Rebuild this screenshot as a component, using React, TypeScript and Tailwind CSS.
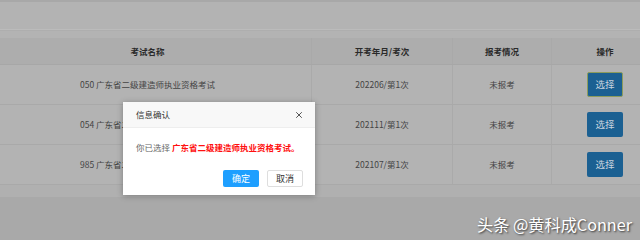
import { X } from 'lucide-react'

interface ExamRow {
  name: string
  period: string
  status: string
}

const ROWS: ExamRow[] = [
  { name: '050 广东省二级建造师执业资格考试', period: '202206/第1次', status: '未报考' },
  { name: '054 广东省二级建造师执业资格考试', period: '202111/第1次', status: '未报考' },
  { name: '985 广东省二级建造师执业资格考试', period: '202107/第1次', status: '未报考' }
]

export default function App() {
  return (
    <div
      className="relative w-[640px] h-[240px] overflow-hidden bg-[#a9a9a9] text-[8.5px]"
      style={{ fontFamily: '"Noto Sans CJK SC", "Noto Sans", sans-serif' }}
    >
      {/* Page under the mask */}
      <div className="bg-[#b3b3b3]">
        <div className="h-[29px] border-t-2 border-[#a8a8a8]" />
        <div className="h-[1px] bg-[#bbbbbb]" />
        <div className="h-[8px] border-t border-[#aeaeae]" />

        {/* Table */}
        <div className="ml-[-16px] w-[674px]">
          <div className="flex h-[27px] items-center bg-[#adadad] border-b border-[#a7a7a7] font-bold text-[#2a2a2a]">
            <div className="w-[328px] h-full flex items-center justify-center border-r border-[#a9a9a9]">考试名称</div>
            <div className="w-[141px] h-full flex items-center justify-center border-r border-[#a9a9a9]">开考年月/考次</div>
            <div className="w-[99px] h-full flex items-center justify-center border-r border-[#a9a9a9]">报考情况</div>
            <div className="w-[106px] h-full flex items-center justify-center">操作</div>
          </div>
          {ROWS.map((row, i) => (
            <div key={row.name} className="flex h-[40px] items-center border-b border-[#a9a9a9] text-[#444444]">
              <div className="w-[328px] h-full flex items-center justify-center border-r border-[#aaaaaa]">{row.name}</div>
              <div className="w-[141px] h-full flex items-center justify-center border-r border-[#aaaaaa]">{row.period}</div>
              <div className="w-[99px] h-full flex items-center justify-center border-r border-[#aaaaaa]">{row.status}</div>
              <div className="w-[106px] h-full flex items-center justify-center">
                <button
                  type="button"
                  className={`w-[36px] h-[25px] rounded-[2px] bg-[#1b6092] text-[9.5px] text-[#c9d4de] ${i === 0 ? 'border border-[#8c9c5c]' : ''}`}
                >
                  选择
                </button>
              </div>
            </div>
          ))}
          <div className="h-[12px] bg-[#b0b0b0]" />
        </div>
      </div>

      {/* Confirm dialog */}
      <div className="absolute left-[123px] top-[102px] w-[192px] h-[93px] bg-white shadow-[0_1px_6px_rgba(0,0,0,0.3)] flex flex-col">
        <div className="h-[26px] flex items-center justify-between pl-[13px] pr-[11px] bg-[#f8f8f8] border-b border-[#eeeeee] text-[#333333]">
          <span>信息确认</span>
          <X className="w-[10px] h-[10px] text-[#333333]" strokeWidth={2} />
        </div>
        <div className="pl-[13px] pt-[13px] h-[29px] whitespace-nowrap">
          <span className="text-[#666666]">你已选择 </span>
          <span className="text-[#ff1010] font-bold">广东省二级建造师执业资格考试。</span>
        </div>
        <div className="flex justify-end gap-[8px] pr-[12px] pt-[13px]">
          <button type="button" className="w-[36px] h-[17px] leading-[17px] bg-[#1e9fff] text-white text-[9px] rounded-[2px]">
            确定
          </button>
          <button type="button" className="w-[36px] h-[17px] leading-[15px] bg-white border border-[#dedede] text-[#333333] text-[9px] rounded-[2px]">
            取消
          </button>
        </div>
      </div>

      {/* Watermark */}
      <div className="absolute right-[8px] top-[213px] text-[16.2px] leading-[22px] text-white [text-shadow:1px_1px_2px_rgba(0,0,0,0.7)]">
        头条 @黄科成Conner
      </div>
    </div>
  )
}
